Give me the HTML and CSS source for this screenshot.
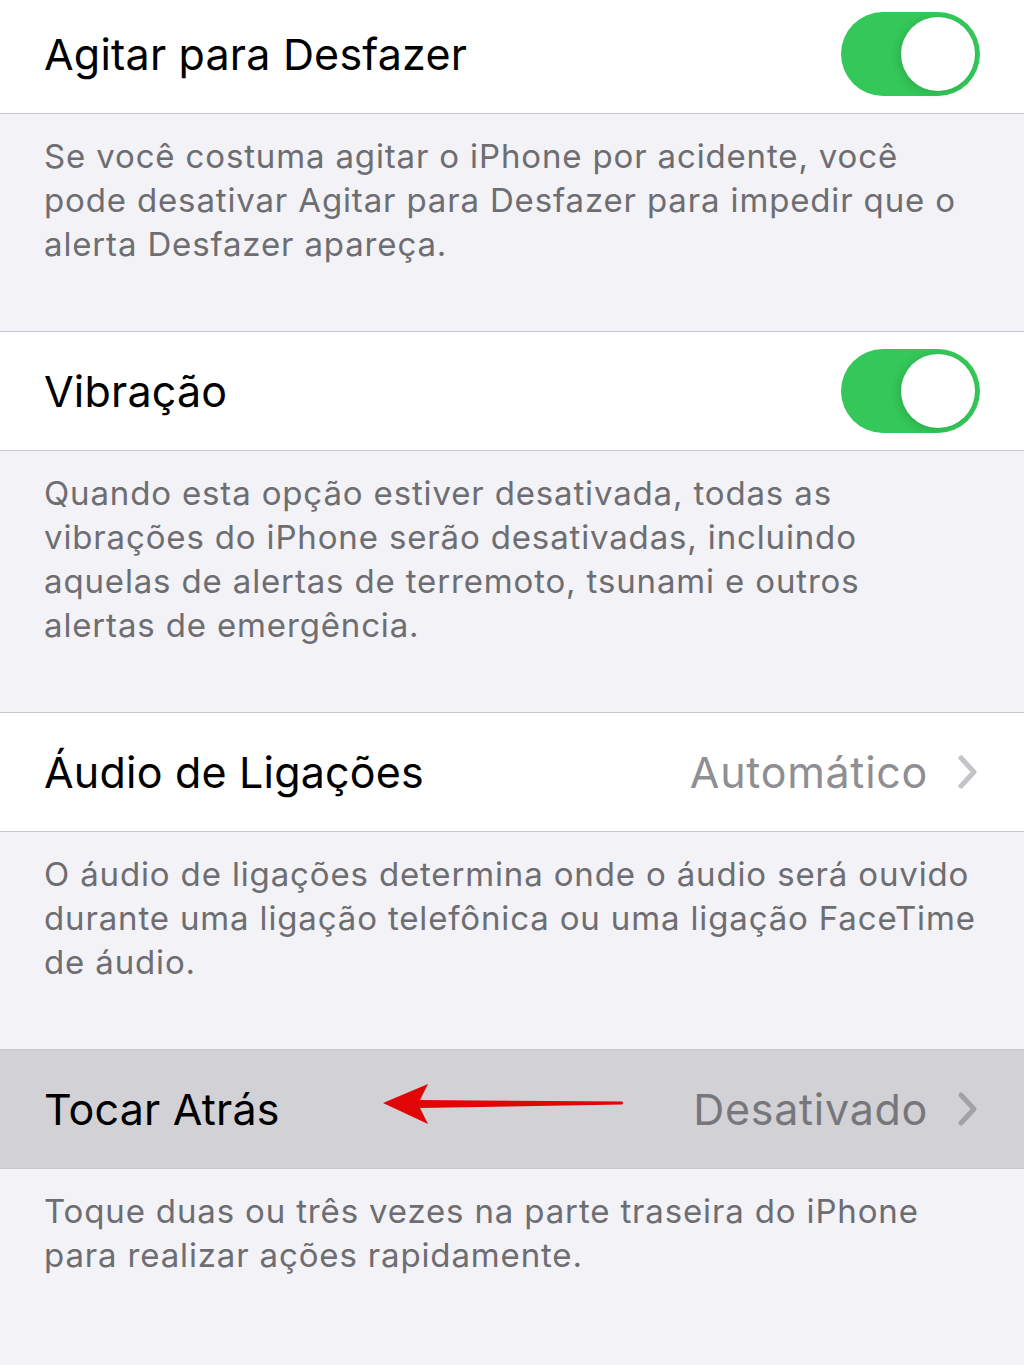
FILE: index.html
```html
<!DOCTYPE html>
<html lang="pt-BR">
<head>
  <meta charset="UTF-8">
  <meta name="viewport" content="width=device-width, initial-scale=1.0">
  <title>Toque</title>
  <link rel="stylesheet" href="styles.css">
</head>
<body>
  <div class="settings">
    <div class="row first">
      <span class="label">Agitar para Desfazer</span>
      <div class="switch on"><div class="knob"></div></div>
    </div>
    <p class="footer">Se você costuma agitar o iPhone por acidente, você pode desativar Agitar para Desfazer para impedir que o alerta Desfazer apareça.</p>

    <div class="row">
      <span class="label">Vibração</span>
      <div class="switch on"><div class="knob"></div></div>
    </div>
    <p class="footer">Quando esta opção estiver desativada, todas as vibrações do iPhone serão desativadas, incluindo aquelas de alertas de terremoto, tsunami e outros alertas de emergência.</p>

    <div class="row">
      <span class="label">Áudio de Ligações</span>
      <span class="value">Automático</span>
      <svg class="chevron" width="22" height="36" viewBox="0 0 22 36"><path d="M4 4 L17 18 L4 32" fill="none" stroke="currentColor" stroke-width="5" stroke-linecap="round" stroke-linejoin="round"/></svg>
    </div>
    <p class="footer">O áudio de ligações determina onde o áudio será ouvido durante uma ligação telefônica ou uma ligação FaceTime de áudio.</p>

    <div class="row selected">
      <span class="label">Tocar Atrás</span>
      <span class="value">Desativado</span>
      <svg class="chevron" width="22" height="36" viewBox="0 0 22 36"><path d="M4 4 L17 18 L4 32" fill="none" stroke="currentColor" stroke-width="5" stroke-linecap="round" stroke-linejoin="round"/></svg>
      <svg class="arrow" width="244" height="44" viewBox="0 0 244 44"><path d="M0 21 L45 2 L37 18 L239 19.5 Q241 21 239 22.5 L37 26 L45 42 Z" fill="#e10606"/></svg>
    </div>
    <p class="footer last">Toque duas ou três vezes na parte traseira do iPhone para realizar ações rapidamente.</p>
  </div>
</body>
</html>
```

FILE: styles.css
```css
body {
  margin: 0;
  background: #f2f2f7;
  font-family: Inter, "Noto Sans", sans-serif;
  overflow: hidden;
}
.settings {
  display: flex;
  flex-direction: column;
}
.row {
  position: relative;
  display: flex;
  align-items: center;
  height: 118px;
  padding: 0 44px 0 44px;
  background: #fff;
  border-top: 1px solid #c8c7cc;
  border-bottom: 1px solid #c8c7cc;
}
.row.first {
  margin-top: -6px;
}
.row.selected {
  background: #d1d1d6;
}
.label {
  flex: 1;
  font-size: 43px;
  color: #000;
  letter-spacing: 0.2px;
}
.value {
  font-size: 43px;
  color: #8e8e93;
  letter-spacing: 0.7px;
  margin-right: 29px;
}
.selected .value {
  color: #77777b;
}
.chevron {
  color: #c4c4c8;
  margin-right: 1px;
}
.selected .chevron {
  color: #a2a2a6;
}
.switch {
  width: 139px;
  height: 84px;
  border-radius: 42px;
  background: #34c759;
  display: flex;
  justify-content: flex-end;
  align-items: center;
  padding: 0 5px;
  box-sizing: border-box;
}
.knob {
  width: 74px;
  height: 74px;
  border-radius: 50%;
  background: #fff;
  box-shadow: -3px 2px 8px rgba(0, 0, 0, 0.12);
}
.arrow {
  position: absolute;
  left: 383px;
  top: 32px;
}
.footer {
  margin: 0;
  padding: 20px 45px 65px 44px;
  font-size: 33px;
  line-height: 44px;
  color: #6d6d72;
  letter-spacing: 0.85px;
}
.footer.last {
  padding-bottom: 120px;
}
```
